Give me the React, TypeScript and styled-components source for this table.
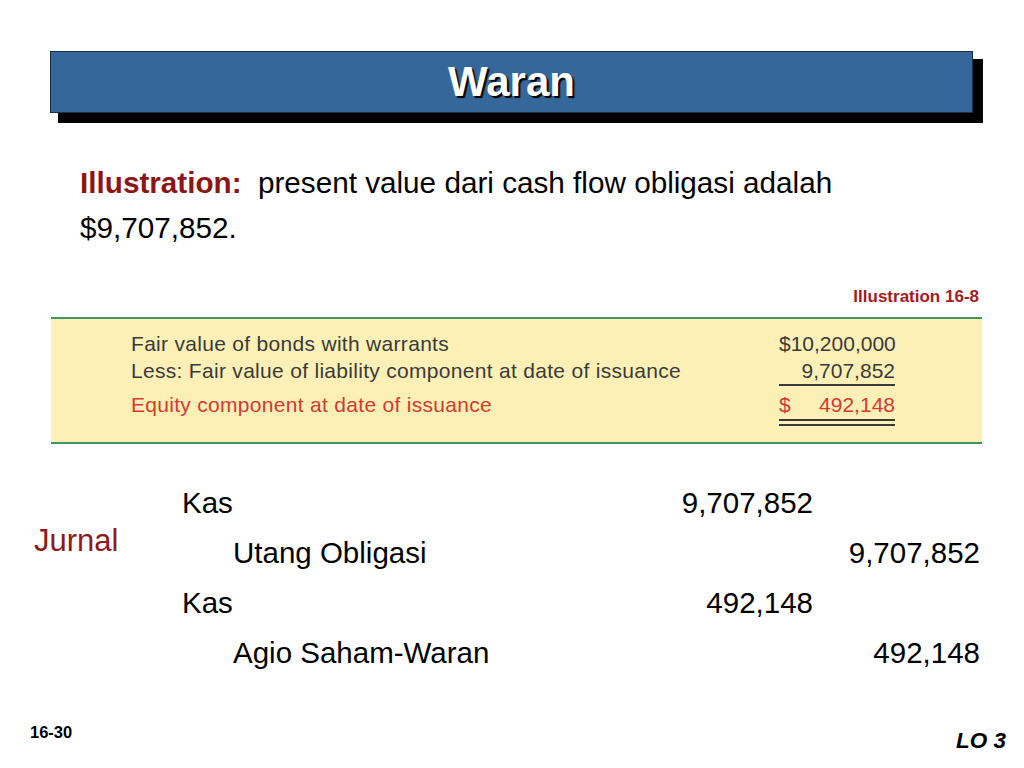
import React from "react";
import styled, { createGlobalStyle } from "styled-components";

const GlobalStyle = createGlobalStyle`
  html, body {
    margin: 0;
    padding: 0;
    background: #ffffff;
  }
  body {
    font-family: "Liberation Sans", Arial, Helvetica, sans-serif;
    color: #000;
  }
`;

const Slide = styled.div`
  width: 1024px;
  height: 768px;
  display: flex;
  flex-direction: column;
  overflow: hidden;
  background: #ffffff;
`;

const TitleBar = styled.div`
  box-sizing: border-box;
  margin: 51px 0 0 50px;
  width: 923px;
  height: 62px;
  border: 1px solid #1c2c44;
  background: #36679a;
  box-shadow: 9px 9px 0 1px #000;
  display: flex;
  align-items: center;
  justify-content: center;
`;

const Title = styled.h1`
  margin: 0;
  font-size: 42px;
  font-weight: bold;
  color: #ffffff;
  text-shadow: 2px 2px 1px #000;
`;

const Intro = styled.p`
  margin: 47px 0 0 80px;
  width: 790px;
  font-size: 29.7px;
  line-height: 45px;
`;

const IntroLabel = styled.span`
  font-weight: bold;
  color: #8e1515;
  margin-right: 8px;
`;

const Caption = styled.div`
  margin: 37px 45px 0 0;
  text-align: right;
  font-size: 17px;
  line-height: 20px;
  font-weight: bold;
  color: #a31c1c;
`;

const Exhibit = styled.div`
  box-sizing: border-box;
  margin: 10px 42px 0 51px;
  height: 127px;
  padding: 11px 87px 0 80px;
  background: #fdf0b6;
  border-top: 2px solid #3f9660;
  border-bottom: 2px solid #3f9660;
  display: grid;
  grid-template-columns: 1fr 116px;
  align-content: start;
`;

const ExLabel = styled.div<{ $red?: boolean; $gap?: number }>`
  font-size: 21px;
  line-height: 27px;
  letter-spacing: 0.3px;
  color: ${(p) => (p.$red ? "#d23a30" : "#3a3a3a")};
  margin-top: ${(p) => p.$gap ?? 0}px;
`;

const ExAmount = styled.div<{ $red?: boolean; $gap?: number; $rule?: "single" | "double" }>`
  font-size: 21px;
  line-height: 27px;
  color: ${(p) => (p.$red ? "#d23a30" : "#3a3a3a")};
  margin-top: ${(p) => p.$gap ?? 0}px;
  display: flex;
  justify-content: space-between;
  white-space: nowrap;
  border-bottom: ${(p) =>
    p.$rule === "single"
      ? "2px solid #3a3a3a"
      : p.$rule === "double"
      ? "7px double #3a3a3a"
      : "none"};
  padding-bottom: ${(p) => (p.$rule === "double" ? 1 : 0)}px;
  margin-bottom: ${(p) => (p.$rule === "single" ? -2 : 0)}px;
`;

const Journal = styled.div`
  margin: 34px 0 0 0;
  display: grid;
  grid-template-columns: 148px 798px;
  padding-left: 34px;
`;

const JournalTag = styled.div`
  margin-top: 38px;
  font-size: 31px;
  line-height: 50px;
  color: #8b1a1a;
  align-self: start;
`;

const Entries = styled.div`
  display: grid;
  grid-template-columns: 1fr 140px 167px;
  font-size: 29.5px;
  line-height: 50px;
`;

const Account = styled.div<{ $credit?: boolean }>`
  padding-left: ${(p) => (p.$credit ? 51 : 0)}px;
`;

const Money = styled.div`
  text-align: right;
`;

const Footer = styled.div`
  margin-top: auto;
  height: 46px;
  padding: 0 18px 0 30px;
  display: flex;
  justify-content: space-between;
  align-items: flex-start;
  font-weight: bold;
`;

const PageNum = styled.div`
  font-size: 16.5px;
  line-height: 20px;
`;

const LoTag = styled.div`
  margin-top: 6px;
  font-size: 22.5px;
  line-height: 26px;
  font-style: italic;
`;

const entries = [
  { account: "Kas", debit: "9,707,852", credit: "" },
  { account: "Utang Obligasi", debit: "", credit: "9,707,852" },
  { account: "Kas", debit: "492,148", credit: "" },
  { account: "Agio Saham-Waran", debit: "", credit: "492,148" },
];

function App() {
  return (
    <Slide>
      <GlobalStyle />
      <TitleBar>
        <Title>Waran</Title>
      </TitleBar>

      <Intro>
        <IntroLabel>Illustration:</IntroLabel> present value dari cash flow
        obligasi adalah $9,707,852.
      </Intro>

      <Caption>Illustration 16-8</Caption>

      <Exhibit>
        <ExLabel>Fair value of bonds with warrants</ExLabel>
        <ExAmount>
          <span />
          <span>$10,200,000</span>
        </ExAmount>
        <ExLabel>Less: Fair value of liability component at date of issuance</ExLabel>
        <ExAmount $rule="single">
          <span />
          <span>9,707,852</span>
        </ExAmount>
        <ExLabel $red $gap={7}>
          Equity component at date of issuance
        </ExLabel>
        <ExAmount $red $gap={7} $rule="double">
          <span>$</span>
          <span>492,148</span>
        </ExAmount>
      </Exhibit>

      <Journal>
        <JournalTag>Jurnal</JournalTag>
        <Entries>
          {entries.map((e, i) => (
            <React.Fragment key={i}>
              <Account $credit={!!e.credit}>{e.account}</Account>
              <Money>{e.debit}</Money>
              <Money>{e.credit}</Money>
            </React.Fragment>
          ))}
        </Entries>
      </Journal>

      <Footer>
        <PageNum>16-30</PageNum>
        <LoTag>LO 3</LoTag>
      </Footer>
    </Slide>
  );
}

export default App;
